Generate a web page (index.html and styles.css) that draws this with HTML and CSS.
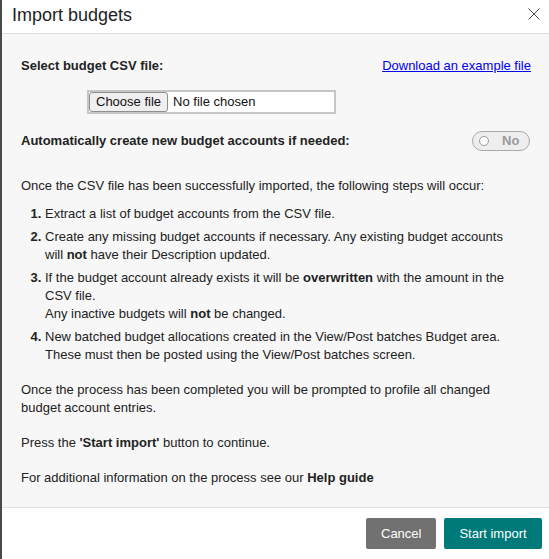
FILE: index.html
```html
<!DOCTYPE html>
<html lang="en">
<head>
<meta charset="utf-8">
<title>Import budgets</title>
<link rel="stylesheet" href="styles.css">
</head>
<body>
<div class="modal">
  <header class="modal-header">
    <h1 class="modal-title">Import budgets</h1>
    <button class="close-btn" aria-label="Close">
      <svg width="12" height="12" viewBox="0 0 12 12"><path d="M0.5 0.5 L11.5 11.5 M11.5 0.5 L0.5 11.5" stroke="#4a4a4a" stroke-width="1" fill="none"/></svg>
    </button>
  </header>
  <main class="modal-body">
    <div class="row">
      <span class="label">Select budget CSV file:</span>
      <a class="link" href="#">Download an example file</a>
    </div>
    <div class="file-row">
      <div class="file-input">
        <span class="file-btn">Choose file</span>
        <span class="file-name">No file chosen</span>
      </div>
    </div>
    <div class="row toggle-row">
      <span class="label">Automatically create new budget accounts if needed:</span>
      <span class="toggle"><span class="knob"></span><span class="toggle-text">No</span></span>
    </div>
    <p class="intro">Once the CSV file has been successfully imported, the following steps will occur:</p>
    <ol class="steps">
      <li>Extract a list of budget accounts from the CSV file.</li>
      <li>Create any missing budget accounts if necessary. Any existing budget accounts will <b>not</b> have their Description updated.</li>
      <li>If the budget account already exists it will be <b>overwritten</b> with the amount in the CSV file.<br>Any inactive budgets will <b>not</b> be changed.</li>
      <li>New batched budget allocations created in the View/Post batches Budget area. These must then be posted using the View/Post batches screen.</li>
    </ol>
    <p class="para">Once the process has been completed you will be prompted to profile all changed budget account entries.</p>
    <p class="para">Press the <b>'Start import'</b> button to continue.</p>
    <p class="para">For additional information on the process see our <b>Help guide</b></p>
  </main>
  <footer class="modal-footer">
    <button class="btn btn-cancel">Cancel</button>
    <button class="btn btn-primary">Start import</button>
  </footer>
</div>
</body>
</html>
```

FILE: styles.css
```css
html, body {
  margin: 0;
  padding: 0;
}
body {
  background: #4a4a4a;
  font-family: "Liberation Sans", Arial, Helvetica, sans-serif;
  font-size: 13px;
  line-height: 18px;
  color: #222;
  width: 549px;
  height: 559px;
  overflow: hidden;
}
.modal {
  margin-left: 2px;
  height: 559px;
  background: #fff;
  display: flex;
  flex-direction: column;
}
.modal-header {
  flex: none;
  height: 33px;
  display: flex;
  align-items: center;
  justify-content: space-between;
  padding: 0 9px 0 10px;
  border-bottom: 1px solid #dedede;
  box-sizing: content-box;
}
.modal-title {
  margin: -3px 0 0 0;
  font-size: 18px;
  line-height: 22px;
  font-weight: normal;
  color: #1e1e1e;
}
.close-btn {
  border: 0;
  background: none;
  padding: 0;
  margin: -5px 0 0 0;
  width: 12px;
  height: 12px;
  display: flex;
}
.modal-body {
  flex: 1;
  background: #f7f7f7;
  padding: 23px 18px 0 19px;
}
.row {
  display: flex;
  justify-content: space-between;
  align-items: center;
}
.label {
  font-weight: bold;
}
.link {
  color: #0000ee;
  text-decoration: underline;
}
.file-row {
  margin-top: 15px;
  padding-left: 66px;
  display: flex;
}
.file-input {
  width: 249px;
  height: 24px;
  box-sizing: border-box;
  border: 2px solid #c6c6c6;
  background: #fff;
  display: flex;
  align-items: center;
}
.file-btn {
  height: 20px;
  box-sizing: border-box;
  padding: 0 6px;
  border: 1px solid #8f8f8f;
  border-radius: 3px;
  background: #efefef;
  line-height: 18px;
  color: #111;
}
.file-name {
  margin-left: 5px;
  color: #111;
}
.toggle-row {
  margin-top: 17px;
  height: 20px;
}
.toggle {
  width: 58px;
  height: 20px;
  box-sizing: border-box;
  margin-right: 1px;
  border: 1px solid #a9a9a9;
  border-radius: 10px;
  background: #eeeeee;
  display: flex;
  align-items: center;
  padding-left: 6px;
}
.knob {
  width: 10px;
  height: 10px;
  box-sizing: border-box;
  border: 1px solid #9a9a9a;
  border-radius: 50%;
  background: #fff;
}
.toggle-text {
  margin-left: 13px;
  font-weight: bold;
  color: #9a9a9a;
}
.intro {
  margin: 26px 0 0 0;
}
.steps {
  margin: 10px 0 0 0;
  padding: 0 15px 0 24px;
}
.steps li + li {
  margin-top: 5px;
}
.steps li::marker {
  font-weight: bold;
}
.para {
  margin: 17px 0 0 0;
}
.modal-footer {
  flex: none;
  height: 52px;
  box-sizing: border-box;
  border-top: 1px solid #e2e2e2;
  padding: 10px 7px 0 0;
  display: flex;
  justify-content: flex-end;
  align-items: flex-start;
  gap: 8px;
}
.btn {
  height: 31px;
  border: 0;
  border-radius: 2px;
  padding: 0 15px;
  font-family: "Liberation Sans", Arial, Helvetica, sans-serif;
  font-size: 13px;
  color: #fff;
}
.btn-cancel {
  background: #717171;
  width: 70px;
}
.btn-primary {
  background: #007a78;
  width: 98px;
}
```
